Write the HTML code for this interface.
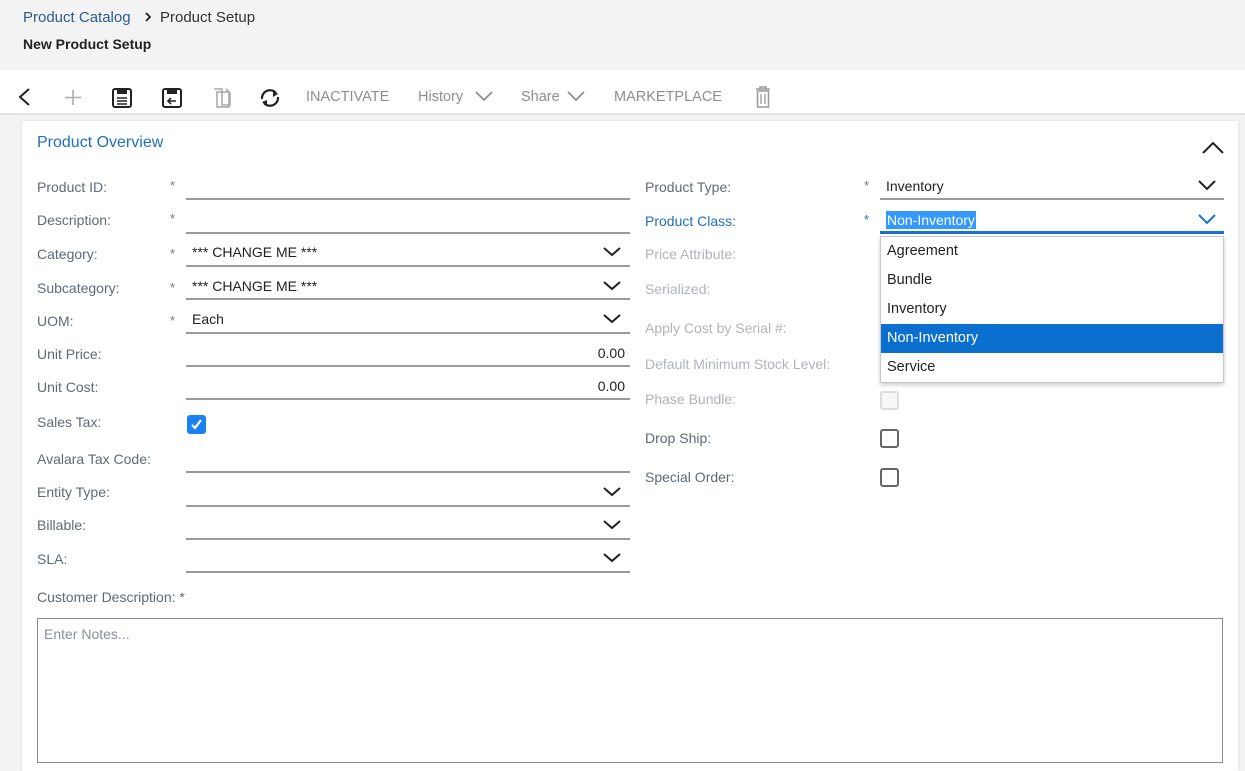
<!DOCTYPE html>
<html><head><meta charset="utf-8"><style>
*{margin:0;padding:0;box-sizing:border-box}
body{width:1245px;height:766px;overflow:hidden;background:#f3f3f3;font-family:"Liberation Sans",sans-serif;font-size:14px;color:#222;position:relative}
.a{position:absolute;white-space:nowrap}
.lbl{position:absolute;color:#5f6a75;font-size:14px;transform:translateY(-50%)}
.dis{color:#b0b4b8}
.ul{position:absolute;height:2px;background:#9a9a9a}
.star{position:absolute;color:#777;font-size:13px}
.val{position:absolute;font-size:14px;color:#222;transform:translateY(-50%)}
.cb{position:absolute;width:19px;height:19px;border:2px solid #666;border-radius:3px;background:#fff}
.tb{position:absolute;top:89px;font-size:14.5px;color:#8e8e8e}
</style></head><body>
<div class="a" style="left:23px;top:9px;font-size:15px;color:#2a5c8c">Product Catalog</div>
<svg class="a" style="left:143px;top:11px" width="10" height="12"><path d="M3 2 L7 6 L3 10" fill="none" stroke="#222" stroke-width="1.8"/></svg>
<div class="a" style="left:160px;top:9px;font-size:15px;color:#333">Product Setup</div>
<div class="a" style="left:23px;top:36px;font-size:14px;font-weight:bold;color:#222">New Product Setup</div>

<div class="a" style="left:0;top:70px;width:1245px;height:45px;background:#fff;border-bottom:2px solid #e2e2e2"></div>
<svg class="a" style="left:0;top:80px" width="300" height="35">
<path d="M29 9 L20 17 L29 25" fill="none" stroke="#222" stroke-width="2"/>
<path d="M73 10 V25 M65 17.5 H81" stroke="#aaa" stroke-width="1.6"/>
<rect x="113" y="9" width="18" height="18" rx="2" fill="none" stroke="#222" stroke-width="2"/><rect x="117" y="9" width="10" height="5" fill="#222"/><path d="M117 18 H127 M117 21 H127 M117 24 H127" stroke="#222" stroke-width="1.5"/>
<rect x="163" y="9" width="18" height="18" rx="2" fill="none" stroke="#222" stroke-width="2"/><rect x="167" y="9" width="10" height="5" fill="#222"/><path d="M176 21 H168 M171 18 L168 21 L171 24" fill="none" stroke="#222" stroke-width="1.6"/>
<path d="M214 9 H222 V25 H230 V13 L226 9" fill="none" stroke="#aaa" stroke-width="1.6"/><rect x="217" y="12" width="12" height="15" fill="none" stroke="#aaa" stroke-width="1.6"/>
<path d="M262 19 A8 8 0 0 1 276 13 M278 17 A8 8 0 0 1 264 23" fill="none" stroke="#222" stroke-width="2.2"/><path d="M273 10 L278 14 L273 17 Z M267 20 L262 22 L267 26 Z" fill="#222"/>
</svg>
<div class="tb" style="left:306px">INACTIVATE</div>
<div class="tb" style="left:418px">History</div>
<svg class="a" style="left:474px;top:90px" width="20" height="12"><path d="M2 2 L10 10 L18 2" fill="none" stroke="#888" stroke-width="1.6"/></svg>
<div class="tb" style="left:521px">Share</div>
<svg class="a" style="left:566px;top:90px" width="20" height="12"><path d="M2 2 L10 10 L18 2" fill="none" stroke="#888" stroke-width="1.6"/></svg>
<div class="tb" style="left:614px">MARKETPLACE</div>
<svg class="a" style="left:753px;top:85px" width="20" height="26"><path d="M3 4 H17 M7 4 V2 H13 V4" fill="none" stroke="#999" stroke-width="1.5"/><rect x="4.5" y="6" width="11" height="16" fill="none" stroke="#999" stroke-width="1.5"/><path d="M8 9 V19 M12 9 V19" stroke="#999" stroke-width="1.3"/></svg>

<div class="a" style="left:22px;top:121px;width:1216px;height:650px;background:#fff;box-shadow:0 0 2px rgba(0,0,0,.15)"></div>
<div class="a" style="left:37px;top:134px;font-size:16px;color:#1f6fbf">Product Overview</div>
<svg class="a" style="left:1201px;top:140px" width="24" height="16"><path d="M2 13 L12 3 L22 13" fill="none" stroke="#222" stroke-width="2"/></svg>

<div class="lbl" style="left:37px;top:187px">Product ID:</div><div class="star" style="left:170px;top:178px">*</div><div class="ul" style="left:186px;top:198px;width:444px"></div>
<div class="lbl" style="left:37px;top:220px">Description:</div><div class="star" style="left:170px;top:211px">*</div><div class="ul" style="left:186px;top:232px;width:444px"></div>
<div class="lbl" style="left:37px;top:254px">Category:</div><div class="star" style="left:170px;top:246px">*</div><div class="val" style="left:192px;top:252px">*** CHANGE ME ***</div><div class="ul" style="left:186px;top:265px;width:444px"></div>
<div class="lbl" style="left:37px;top:288px">Subcategory:</div><div class="star" style="left:170px;top:280px">*</div><div class="val" style="left:192px;top:286px">*** CHANGE ME ***</div><div class="ul" style="left:186px;top:298px;width:444px"></div>
<div class="lbl" style="left:37px;top:321px">UOM:</div><div class="star" style="left:170px;top:313px">*</div><div class="val" style="left:192px;top:319px">Each</div><div class="ul" style="left:186px;top:332px;width:444px"></div>
<div class="lbl" style="left:37px;top:354px">Unit Price:</div><div class="val" style="left:560px;width:65px;text-align:right;top:353px">0.00</div><div class="ul" style="left:186px;top:365px;width:444px"></div>
<div class="lbl" style="left:37px;top:387px">Unit Cost:</div><div class="val" style="left:560px;width:65px;text-align:right;top:386px">0.00</div><div class="ul" style="left:186px;top:398px;width:444px"></div>
<div class="lbl" style="left:37px;top:422px">Sales Tax:</div>
<div class="a" style="left:187px;top:415px;width:19px;height:19px;background:#1a82f0;border-radius:3px"></div>
<svg class="a" style="left:187px;top:415px" width="19" height="19"><path d="M5 10 L8 13 L14 5" fill="none" stroke="#fff" stroke-width="2.2"/></svg>
<div class="lbl" style="left:37px;top:459px">Avalara Tax Code:</div><div class="ul" style="left:186px;top:471px;width:444px"></div>
<div class="lbl" style="left:37px;top:492px">Entity Type:</div><div class="ul" style="left:186px;top:505px;width:444px"></div>
<div class="lbl" style="left:37px;top:525px">Billable:</div><div class="ul" style="left:186px;top:538px;width:444px"></div>
<div class="lbl" style="left:37px;top:559px">SLA:</div><div class="ul" style="left:186px;top:571px;width:444px"></div>
<svg class="a" style="left:600px;top:240px" width="24" height="340">
<g fill="none" stroke="#222" stroke-width="2">
<path d="M4 8 L12 15 L20 8"/><path d="M4 42 L12 49 L20 42"/><path d="M4 75 L12 82 L20 75"/>
<path d="M4 248 L12 255 L20 248"/><path d="M4 281 L12 288 L20 281"/><path d="M4 314 L12 321 L20 314"/></g></svg>

<div class="lbl" style="left:37px;top:597px">Customer Description: *</div>
<div class="a" style="left:37px;top:618px;width:1186px;height:145px;border:1.5px solid #8a8a8a"></div>
<div class="a" style="left:44px;top:626px;color:#8a9099;font-size:14px">Enter Notes...</div>

<div class="lbl" style="left:645px;top:187px">Product Type:</div><div class="star" style="left:864px;top:178px">*</div><div class="val" style="left:886px;top:186px">Inventory</div><div class="ul" style="left:880px;top:198px;width:344px"></div>
<svg class="a" style="left:1196px;top:178px" width="24" height="14"><path d="M3 3 L11 11 L19 3" fill="none" stroke="#222" stroke-width="2"/></svg>
<div class="lbl" style="left:645px;top:221px;color:#1f6fbf">Product Class:</div><div class="star" style="left:864px;top:212px;color:#1f6fbf">*</div>
<div class="a" style="left:886px;top:211px;height:18px;background:#3399ff;color:#fff;padding:0 1px;line-height:18px;font-size:14px">Non-Inventory</div>
<div class="a" style="left:880px;top:231px;width:344px;height:3px;background:#1a73d0"></div>
<svg class="a" style="left:1196px;top:212px" width="24" height="14"><path d="M3 3 L11 11 L19 3" fill="none" stroke="#1a73d0" stroke-width="2"/></svg>
<div class="lbl dis" style="left:645px;top:254px">Price Attribute:</div>
<div class="lbl dis" style="left:645px;top:289px">Serialized:</div>
<div class="lbl dis" style="left:645px;top:328px">Apply Cost by Serial #:</div>
<div class="lbl dis" style="left:645px;top:364px">Default Minimum Stock Level:</div>
<div class="lbl dis" style="left:645px;top:399px">Phase Bundle:</div>
<div class="cb" style="left:880px;top:391px;border-color:#ddd;background:#f7f7f7"></div>
<div class="lbl" style="left:645px;top:438px">Drop Ship:</div><div class="cb" style="left:880px;top:429px"></div>
<div class="lbl" style="left:645px;top:477px">Special Order:</div><div class="cb" style="left:880px;top:468px"></div>

<div class="a" style="left:880px;top:236px;width:344px;height:147px;background:#fff;border:1px solid #c8c8c8;box-shadow:0 2px 4px rgba(0,0,0,.2)">
<div class="a" style="left:6px;top:6px;font-size:14.5px">Agreement</div>
<div class="a" style="left:6px;top:35px;font-size:14.5px">Bundle</div>
<div class="a" style="left:6px;top:64px;font-size:14.5px">Inventory</div>
<div class="a" style="left:0;top:87px;width:342px;height:29px;background:#0a6fcf"></div>
<div class="a" style="left:6px;top:93px;font-size:14.5px;color:#fff">Non-Inventory</div>
<div class="a" style="left:6px;top:122px;font-size:14.5px">Service</div>
</div>
</body></html>
